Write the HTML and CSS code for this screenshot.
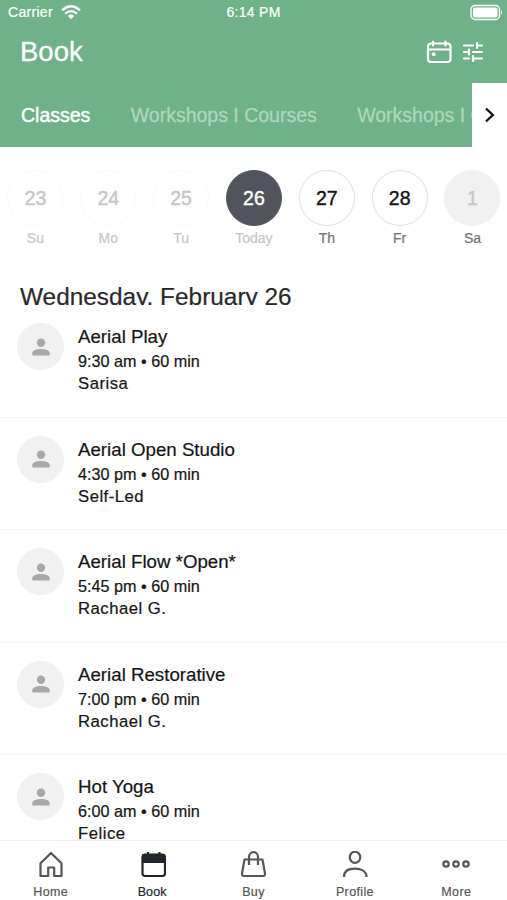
FILE: index.html
```html
<!DOCTYPE html>
<html lang="en">
<head>
<meta charset="utf-8">
<meta name="viewport" content="width=device-width, initial-scale=1">
<title>Book</title>
<link rel="stylesheet" href="styles.css">
</head>
<body>
<svg class="defs" width="0" height="0" aria-hidden="true">
  <symbol id="person" viewBox="0 0 18 18">
    <circle cx="9" cy="4.7" r="4.2"/>
    <path d="M.3 17.500v-2.200C.3 12.300 5 11 9 11s8.700 1.300 8.700 4.300v2.200z"/>
  </symbol>
</svg>
<div class="screen">
  <header class="top">
    <div class="status">
      <div class="carrier">Carrier
        <svg width="20" height="15" viewBox="0 0 20 15" fill="none" stroke="#fff" stroke-width="2.300">
          <path d="M1 5.300Q10-2.700 19 5.300M4.100 8.700Q10 3.500 15.900 8.700"/>
          <path d="M10 14.200l-3.200-3.300Q10 8.300 13.200 10.900z" fill="#fff" stroke="none"/>
        </svg>
      </div>
      <div class="time">6:14 PM</div>
      <svg class="battery" width="33" height="17" viewBox="0 0 33 17">
        <rect x="1" y="1.500" width="28.500" height="14" rx="4" fill="none" stroke="#fff" stroke-width="1.300"/>
        <rect x="3" y="3.500" width="24.500" height="10" rx="2" fill="#fff"/>
        <path d="M31 6q2 2.500 0 5z" fill="#fff"/>
      </svg>
    </div>
    <div class="titlebar">
      <h1>Book</h1>
      <div class="actions">
        <svg width="26" height="24" viewBox="0 0 26 24" fill="none" stroke="#fff" stroke-width="2.200" stroke-linecap="round">
          <rect x="2" y="3.500" width="22.500" height="18.500" rx="3"/>
          <path d="M2 9.500h22M7 1.500v4M19.500 1.500v4"/>
          <circle cx="7.700" cy="14.200" r="1.900" fill="#fff" stroke="none"/>
        </svg>
        <svg width="22" height="22" viewBox="0 0 22 22" fill="none" stroke="#fff" stroke-width="2.200" stroke-linecap="round">
          <path d="M2 4.500h9M15 2v5M15 4.500h5M2 11h5M7 8.500v5M11 11h9M2 17.500h5M11 15v5M11 17.500h9"/>
        </svg>
      </div>
    </div>
    <div class="tabrow">
      <nav class="tabs">
        <span class="tab active">Classes</span>
        <span class="tab">Workshops I Courses</span>
        <span class="tab">Workshops I Courses</span>
      </nav>
      <div class="next">
        <svg width="12" height="16" viewBox="0 0 12 16" fill="none" stroke="#151515" stroke-width="2.400"><path d="M2 1.500L8.800 8 2 14.500"/></svg>
      </div>
    </div>
  </header>

  <section class="week">
    <div class="day past"><b>23</b><span>Su</span></div>
    <div class="day past"><b>24</b><span>Mo</span></div>
    <div class="day past"><b>25</b><span>Tu</span></div>
    <div class="day today"><b>26</b><span>Today</span></div>
    <div class="day"><b>27</b><span>Th</span></div>
    <div class="day"><b>28</b><span>Fr</span></div>
    <div class="day off"><b>1</b><span>Sa</span></div>
  </section>

  <main class="schedule">
    <h2>Wednesday, February 26</h2>
    <article class="item">
      <div class="avatar"><svg width="18" height="18"><use href="#person"/></svg></div>
      <div class="info"><h3>Aerial Play</h3><p class="when">9:30 am • 60 min</p><p class="who">Sarisa</p></div>
    </article>
    <article class="item">
      <div class="avatar"><svg width="18" height="18"><use href="#person"/></svg></div>
      <div class="info"><h3>Aerial Open Studio</h3><p class="when">4:30 pm • 60 min</p><p class="who">Self-Led</p></div>
    </article>
    <article class="item">
      <div class="avatar"><svg width="18" height="18"><use href="#person"/></svg></div>
      <div class="info"><h3>Aerial Flow *Open*</h3><p class="when">5:45 pm • 60 min</p><p class="who">Rachael G.</p></div>
    </article>
    <article class="item">
      <div class="avatar"><svg width="18" height="18"><use href="#person"/></svg></div>
      <div class="info"><h3>Aerial Restorative</h3><p class="when">7:00 pm • 60 min</p><p class="who">Rachael G.</p></div>
    </article>
    <article class="item">
      <div class="avatar"><svg width="18" height="18"><use href="#person"/></svg></div>
      <div class="info"><h3>Hot Yoga</h3><p class="when">6:00 am • 60 min</p><p class="who">Felice</p></div>
    </article>
  </main>

  <nav class="bottom">
    <div class="link">
      <svg width="28" height="28" viewBox="0 0 28 28"><path d="M3.500 12.300L14 2l10.500 10.300V25H17.200v-8.500h-6V25H3.500z" stroke-linejoin="round"/></svg>
      <span>Home</span>
    </div>
    <div class="link current">
      <svg width="28" height="28" viewBox="0 0 28 28"><rect x="4.500" y="3.500" width="22.500" height="21.500" rx="2.500"/><path d="M5.500 4h20.500v7H5.500z" fill="#24242c"/><path d="M10 1v3M21.500 1v3"/></svg>
      <span>Book</span>
    </div>
    <div class="link">
      <svg width="28" height="28" viewBox="0 0 28 28"><path d="M5.500 8.500h18L26 22.500q.2 2.500-2 2.500H5q-2.200 0-2-2.500zM10 14V6a4.500 4.800 0 0 1 9 0V14" stroke-linejoin="round"/></svg>
      <span>Buy</span>
    </div>
    <div class="link">
      <svg width="28" height="28" viewBox="0 0 28 28"><ellipse cx="14" cy="6.300" rx="5.200" ry="5.600"/><path d="M3 26C3 20 8 17.700 14 17.700S25.500 20 25.500 26"/></svg>
      <span>Profile</span>
    </div>
    <div class="link">
      <svg width="28" height="28" viewBox="0 0 28 28"><circle cx="4" cy="13" r="2.700"/><circle cx="14" cy="13" r="2.700"/><circle cx="24" cy="13" r="2.700"/></svg>
      <span>More</span>
    </div>
  </nav>
</div>
</body>
</html>
```
FILE: styles.css
```css
* { box-sizing: border-box; }
body { margin: 0; font-family: "Liberation Sans", Arial, sans-serif; color: #151515; background: #fff; }
h1, h2, h3, p { margin: 0; font-weight: 400; }
svg { display: block; flex: none; }
.defs { position: absolute; }
.screen { height: 900px; display: flex; flex-direction: column; overflow: hidden; }

.top { height: 147px; flex: none; background: #6fb188; color: #fff; display: flex; flex-direction: column; }
.status { height: 24px; display: grid; grid-template-columns: 1fr auto 1fr; align-items: center; padding: 0 4px 0 8px; font-size: 14px; -webkit-text-stroke: .2px; }
.carrier { display: flex; align-items: center; gap: 8px; letter-spacing: .3px; }
.time { letter-spacing: .3px; transform: translateX(-2px); }
.battery { justify-self: end; }
.titlebar { height: 59px; display: flex; justify-content: space-between; padding: 12px 23px 0 20px; }
h1 { font-size: 27.500px; line-height: 32px; -webkit-text-stroke: .3px; }
.actions { display: flex; align-items: center; gap: 10px; height: 31px; }
.tabrow { height: 64px; display: flex; }
.tabs { flex: 1; min-width: 0; overflow: hidden; display: flex; gap: 40.400px; padding-left: 21px; font-size: 19.500px; line-height: 65px; white-space: nowrap; -webkit-text-stroke: .3px; }
.tab { color: #acd8bb; }
.tab.active { color: #fff; -webkit-text-stroke: .4px; }
.next { width: 35px; flex: none; background: #fff; display: grid; place-items: center; }

.week { height: 127px; flex: none; display: grid; grid-template-columns: repeat(7, 72.850px); padding: 23px 0 0; margin-left: -1px; }
.day { display: flex; flex-direction: column; align-items: center; }
.day b { width: 56px; height: 56px; border: 1px solid #dedede; border-radius: 50%; display: grid; place-items: center; font-size: 19.500px; font-weight: 400; -webkit-text-stroke: .4px; }
.day span { margin-top: 4px; font-size: 14px; line-height: 17px; color: #747474; -webkit-text-stroke: .2px; }
.past b { border-color: #fafafa; color: #c6c6c6; }
.day.past span, .day.today span { color: #c6c6c6; }
.today b { background: #51545d; border-color: #51545d; color: #fff; }
.off b { background: #f1f1f1; border-color: #f1f1f1; color: #c6c6c6; }

.schedule { flex: 1; min-height: 0; overflow: hidden; padding-top: 9px; }
h2 { height: 22px; overflow: hidden; padding-left: 20px; font-size: 24.400px; line-height: 27px; color: #28282a; -webkit-text-stroke: .2px; }
.item { height: 112.500px; display: flex; gap: 14px; padding: 18px 17px 0; border-bottom: 1px solid #f3f3f3; }
.avatar { width: 47px; height: 47px; flex: none; border-radius: 50%; background: #f1f1f1; color: #a8a8a8; fill: currentColor; display: grid; place-items: center; }
.info { padding-top: 1px; -webkit-text-stroke: .2px; }
h3 { font-size: 18.700px; line-height: 25px; }
.when { font-size: 16.200px; line-height: 24px; }
.who { font-size: 16.700px; line-height: 22px; letter-spacing: .5px; }

.bottom { height: 60px; flex: none; display: grid; grid-template-columns: repeat(5, 1fr); border-top: 1px solid #f1f1f1; background: #fff; }
.link { display: flex; flex-direction: column; align-items: center; padding-top: 10px; color: #55555a; font-size: 12.500px; line-height: 15px; letter-spacing: .35px; }
.link svg { fill: none; stroke: currentColor; stroke-width: 2.200; }
.link span { margin-top: 6px; -webkit-text-stroke: .2px; }
.current { color: #24242c; }
.current span { letter-spacing: .1px; }
```
